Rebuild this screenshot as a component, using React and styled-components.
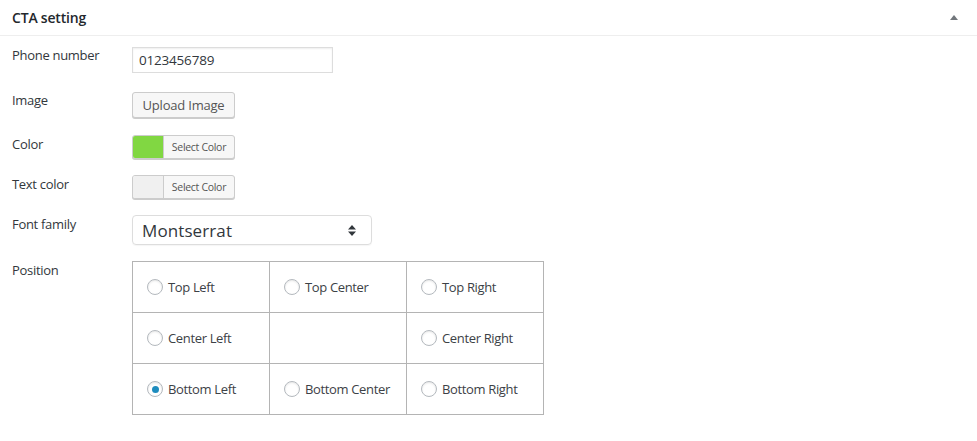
import React, { useState } from "react";
import styled, { createGlobalStyle } from "styled-components";

const GlobalStyle = createGlobalStyle`
  html, body {
    margin: 0;
    padding: 0;
    background: #fff;
  }
  body {
    font-family: "Open Sans", "Noto Sans", sans-serif;
    color: #32373c;
  }
  * {
    box-sizing: border-box;
  }
`;

const Postbox = styled.div`
  width: 977px;
  background: #fff;
`;

const Header = styled.div`
  height: 36px;
  display: flex;
  align-items: center;
  justify-content: space-between;
  padding: 0 12px;
  border-bottom: 1px solid #eee;
  h2 {
    margin: 0;
    font-size: 14px;
    font-weight: 600;
    color: #23282d;
    letter-spacing: -0.2px;
  }
`;

const Toggle = styled.span`
  display: flex;
  width: 14px;
  justify-content: center;
  margin-right: 4px;
  svg {
    display: block;
  }
`;

const Body = styled.div`
  padding: 11px 12px 20px;
  display: flex;
  flex-direction: column;
  gap: 16px;
`;

const Row = styled.div`
  display: grid;
  grid-template-columns: 120px 1fr;
  align-items: start;
  margin-bottom: ${(p) => (p.$extra ? `${p.$extra}px` : "0")};
`;

const Label = styled.div`
  font-size: 13px;
  line-height: 18px;
  color: #32373c;
  margin-top: ${(p) => (p.$offset ? `${p.$offset}px` : "0")};
  letter-spacing: -0.3px;
`;

const TextInput = styled.input`
  width: 201px;
  height: 26px;
  border: 1px solid #ddd;
  box-shadow: inset 0 1px 2px rgba(0, 0, 0, 0.07);
  padding: 0 6px;
  font-family: "Open Sans", "Noto Sans", sans-serif;
  font-size: 13.5px;
  color: #32373c;
  outline: none;
  letter-spacing: -0.2px;
`;

const Button = styled.button`
  height: 26px;
  width: 103px;
  padding: 0 6px;
  border: 1px solid #ccc;
  border-radius: 3px;
  background: #f7f7f7;
  box-shadow: 0 1px 0 #ccc;
  font-family: "Open Sans", "Noto Sans", sans-serif;
  font-size: 13px;
  color: #555;
  cursor: pointer;
  white-space: nowrap;
  letter-spacing: -0.2px;
`;

const ColorButton = styled.button`
  display: flex;
  align-items: stretch;
  width: 103px;
  height: 24px;
  padding: 0;
  border: 1px solid #ccc;
  border-radius: 3px;
  background: #f7f7f7;
  box-shadow: 0 1px 0 #ccc;
  overflow: hidden;
  cursor: pointer;
`;

const Swatch = styled.span`
  width: 31px;
  background: ${(p) => p.$color};
  border-right: 1px solid #ccc;
`;

const SwatchText = styled.span`
  flex: 1;
  display: flex;
  align-items: center;
  justify-content: center;
  font-family: "Open Sans", "Noto Sans", sans-serif;
  font-size: 10.5px;
  color: #555;
  white-space: nowrap;
  letter-spacing: -0.3px;
`;

const Select = styled.div`
  width: 240px;
  height: 30px;
  border: 1px solid #ddd;
  border-radius: 4px;
  box-shadow: 0 1px 1px rgba(0, 0, 0, 0.04);
  display: flex;
  align-items: center;
  justify-content: space-between;
  padding: 0 15px 0 9px;
  font-family: "Open Sans", "Noto Sans", sans-serif;
  font-size: 17px;
  color: #32373c;
  letter-spacing: 0.1px;
`;

const PositionGrid = styled.div`
  display: grid;
  grid-template-columns: repeat(3, 136px);
  grid-auto-rows: 50px;
  gap: 1px;
  padding: 1px;
  background: #b4b4b4;
  width: 412px;
`;

const Cell = styled.label`
  background: #fff;
  display: flex;
  align-items: center;
  gap: 5px;
  padding-left: 14px;
  font-size: 13px;
  color: #3c4146;
  cursor: pointer;
  white-space: nowrap;
  letter-spacing: -0.35px;
`;

const Radio = styled.span`
  width: 16px;
  height: 16px;
  border-radius: 50%;
  border: 1px solid #b4b9be;
  background: #fff;
  box-shadow: inset 0 1px 2px rgba(0, 0, 0, 0.1);
  display: flex;
  align-items: center;
  justify-content: center;
  flex-shrink: 0;
  &::after {
    content: "";
    width: 7px;
    height: 7px;
    border-radius: 50%;
    background: ${(p) => (p.$checked ? "#1e8cbe" : "transparent")};
  }
`;

const positions = [
  "Top Left",
  "Top Center",
  "Top Right",
  "Center Left",
  null,
  "Center Right",
  "Bottom Left",
  "Bottom Center",
  "Bottom Right",
];

const App = () => {
  const [pos, setPos] = useState("Bottom Left");

  return (
    <>
      <GlobalStyle />
      <Postbox>
        <Header>
          <h2>CTA setting</h2>
          <Toggle>
            <svg width="8" height="5" viewBox="0 0 8 5">
              <path d="M0 5 L4 0 L8 5 Z" fill="#72777c" />
            </svg>
          </Toggle>
        </Header>
        <Body>
          <Row $extra={3}>
            <Label $offset={-1}>Phone number</Label>
            <TextInput defaultValue="0123456789" />
          </Row>
          <Row $extra={1}>
            <Label $offset={-1}>Image</Label>
            <div>
              <Button>Upload Image</Button>
            </div>
          </Row>
          <Row>
            <Label>Color</Label>
            <div>
              <ColorButton>
                <Swatch $color="#81d742" />
                <SwatchText>Select Color</SwatchText>
              </ColorButton>
            </div>
          </Row>
          <Row>
            <Label>Text color</Label>
            <div>
              <ColorButton>
                <Swatch $color="#f0f0f0" />
                <SwatchText>Select Color</SwatchText>
              </ColorButton>
            </div>
          </Row>
          <Row>
            <Label>Font family</Label>
            <Select>
              <span>Montserrat</span>
              <svg width="8" height="11" viewBox="0 0 8 11">
                <path d="M0 4.5 L4 0 L8 4.5 Z M0 6.5 L4 11 L8 6.5 Z" fill="#32373c" />
              </svg>
            </Select>
          </Row>
          <Row>
            <Label>Position</Label>
            <PositionGrid>
              {positions.map((p, i) =>
                p ? (
                  <Cell key={p} onClick={() => setPos(p)}>
                    <Radio $checked={pos === p} />
                    {p}
                  </Cell>
                ) : (
                  <Cell key={`empty-${i}`} as="div" />
                )
              )}
            </PositionGrid>
          </Row>
        </Body>
      </Postbox>
    </>
  );
};

export default App;
